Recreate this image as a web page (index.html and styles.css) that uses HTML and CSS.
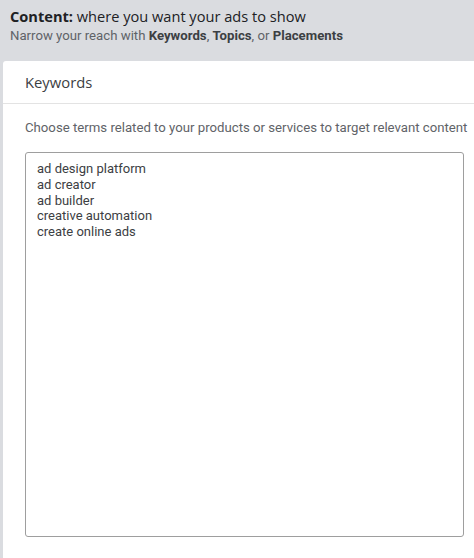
FILE: index.html
```html
<!DOCTYPE html>
<html>
<head>
<meta charset="utf-8">
<link rel="stylesheet" href="styles.css">
</head>
<body>
<header class="top">
  <div class="title"><b>Content:</b> where you want your ads to show</div>
  <div class="sub">Narrow your reach with <b>Keywords</b>, <b>Topics</b>, or <b>Placements</b></div>
</header>
<section class="card">
  <div class="card-head">Keywords</div>
  <div class="card-body">
    <p class="desc">Choose terms related to your products or services to target relevant content</p>
    <div class="box">ad design platform
ad creator
ad builder
creative automation
create online ads</div>
  </div>
</section>
</body>
</html>
```
FILE: styles.css
```css
html, body {
  margin: 0;
  padding: 0;
  height: 100%;
}
body {
  background: #dadce0;
  font-family: Roboto, "Liberation Sans", Arial, sans-serif;
  display: flex;
  flex-direction: column;
  overflow: hidden;
}
.top {
  padding: 6px 0 0 10px;
  height: 54px;
  box-sizing: border-box;
}
.title {
  font-family: "Open Sans", Roboto, sans-serif;
  font-size: 14.6px;
  line-height: 20px;
  color: #202124;
}
.title b { font-weight: 700; }
.sub {
  font-size: 13.2px;
  line-height: 20px;
  color: #5f6368;
}
.sub b { color: #3c4043; font-weight: 700; }
.card {
  flex: 1;
  margin: 7px 0 0 3px;
  background: #fff;
  border-top-left-radius: 3px;
  display: flex;
  flex-direction: column;
}
.card-head {
  height: 43px;
  box-sizing: border-box;
  padding: 11px 0 0 22px;
  font-family: "Open Sans", Roboto, sans-serif;
  font-size: 14.8px;
  color: #3c4043;
  border-bottom: 1px solid #e3e3e3;
}
.card-body {
  flex: 1;
  padding: 0 0 21px 22px;
  display: flex;
  flex-direction: column;
}
.desc {
  margin: 16px 0 0 0;
  font-size: 13.2px;
  line-height: 16px;
  color: #5f6368;
  white-space: nowrap;
}
.box {
  flex: 1;
  margin-top: 16px;
  width: 439px;
  box-sizing: border-box;
  border: 1px solid #9e9e9e;
  border-radius: 3px;
  padding: 8px 11px;
  font-size: 13px;
  line-height: 15.8px;
  color: #3c4043;
  white-space: pre;
}
```
